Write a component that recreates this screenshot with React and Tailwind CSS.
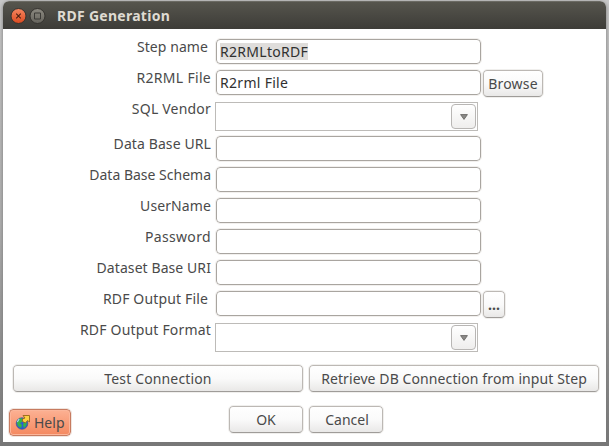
import React from "react";

const rows = [
  { label: "Step name", value: "R2RMLtoRDF", selected: true, tail: "pr-[3px]", track: "tracking-[0.08px]" },
  { label: "R2RML File", value: "R2rml File", button: "Browse", track: "tracking-[0.3px]" },
  { label: "SQL Vendor", combo: true, track: "tracking-[0.2px]" },
  { label: "Data Base URL", track: "tracking-[0.1px]" },
  { label: "Data Base Schema", track: "" },
  { label: "UserName", track: "tracking-[0.1px]" },
  { label: "Password", track: "tracking-[0.35px]" },
  { label: "Dataset Base URI", track: "tracking-[0.08px]" },
  { label: "RDF Output File", button: "...", tail: "pr-[3px]", track: "tracking-[0.15px]" },
  { label: "RDF Output Format", combo: true, track: "tracking-[0.18px]" },
];

function Button({ className = "", children }) {
  return (
    <button
      className={`flex h-[27px] shrink-0 items-center justify-center whitespace-nowrap rounded-[4px] border border-[#bcb8b4] border-b-[#9f9c99] bg-linear-to-b from-white via-[#fafafa] to-[#e9e8e7] outline outline-[#f0efed] ${className}`}
    >
      {children}
    </button>
  );
}

function Combo() {
  return (
    <div className="mt-[2px] flex h-[29px] w-[263px] justify-end border border-[#bdbbb8] bg-white p-px">
      <div className="flex h-[25px] w-[25px] items-center justify-center rounded-[4px] border border-[#b8b6b4] bg-linear-to-b from-white to-[#efeeed] pt-px">
        <svg width="8" height="6" viewBox="0 0 8 6">
          <path d="M.6.6h6.8L4 5.4z" fill="#8c8a88" stroke="#686664" strokeWidth=".9" />
        </svg>
      </div>
    </div>
  );
}

function Field({ row }) {
  return (
    <div className="mt-px ml-px flex h-[25px] w-[265px] items-center rounded-[4px] border border-[#a9a5a0] bg-white pl-[3px] text-[#303030] outline outline-[#f2f0ee]">
      {row.value && (
        <span className={`h-[17px] leading-[17px] tracking-[0.3px] ${row.selected ? "bg-[#dfdddb]" : ""}`}>{row.value}</span>
      )}
    </div>
  );
}

function HelpIcon() {
  return (
    <svg className="-mt-[2px]" width="16" height="16" viewBox="0 0 16 16">
      <circle cx="7" cy="9.5" r="5.8" fill="#2a5fd0" stroke="#3a4f86" strokeWidth=".6" />
      <path d="M2 7l3-3 3 1-1 3-2 1 2 2-1 3-3-2-1-3zM9 8l3 1-1 3-2 2-1-3z" fill="#35b34a" />
      <path d="M2.3 8l1.8-3" stroke="#a9d4f5" strokeWidth="1.2" />
      <path d="M8 1.5h6.5V8l-2-1.5L10.5 9 7.5 7.5V5l2.5-1z" fill="#fbd143" stroke="#976816" strokeWidth=".9" />
    </svg>
  );
}

export default function App() {
  return (
    <div className="h-[446px] w-[609px] overflow-hidden bg-linear-to-b from-[#c9c9c9] via-[#b0b0b0] to-[#777] pt-px pl-[3px] font-['Noto_Sans','Open_Sans',sans-serif] text-[14px] leading-[18px] text-[#4a4a4a]">
      <div className="flex h-[441px] w-[603px] flex-col overflow-hidden rounded-t-[6px] bg-white shadow-[0_1px_4px_#777]">
        <header className="flex h-7 shrink-0 items-center border-t border-[#6b6a63] bg-linear-to-b from-[#56554d] to-[#3d3c38] pl-[7px] font-bold text-[#dfdbd2]">
          <svg width="37" height="18" viewBox="0 0 37 18">
            <defs>
              <linearGradient id="close" x2="0" y2="1">
                <stop stopColor="#f58660" />
                <stop offset="1" stopColor="#dc4a20" />
              </linearGradient>
              <linearGradient id="max" x2="0" y2="1">
                <stop stopColor="#8c8a81" />
                <stop offset="1" stopColor="#65635c" />
              </linearGradient>
            </defs>
            <circle cx="8.5" cy="9" r="7.5" fill="url(#close)" stroke="#35332f" />
            <path d="M6.2 6.7l4.6 4.6M10.8 6.7l-4.6 4.6" stroke="#4c2012" strokeWidth="1.1" />
            <circle cx="27.5" cy="9" r="7.5" fill="url(#max)" stroke="#35332f" />
            <path d="M24.5 6h6v6h-6z" fill="none" stroke="#3b3a36" />
          </svg>
          <span className="ml-[10px] text-[14px] tracking-[0.28px]">RDF Generation</span>
        </header>

        <main className="flex flex-col pt-[9px]">
          {rows.map((row) => (
            <div key={row.label} className={`flex items-start ${row.label === "SQL Vendor" ? "h-[35px]" : "h-[31px]"}`}>
              <div className={`mr-1 w-[208px] text-right whitespace-nowrap ${row.track} ${row.tail || ""}`}>{row.label}</div>
              {row.combo ? <Combo /> : <Field row={row} />}
              {row.button && (
                <Button className={`mt-px ml-[2px] ${row.button === "Browse" ? "w-[60px] tracking-[0.2px]" : "w-[22px] font-bold"}`}>
                  {row.button}
                </Button>
              )}
            </div>
          ))}
        </main>

        <div className="mt-[13px] flex gap-[6px] pl-[10px]">
          <Button className="w-[290px] tracking-[0.15px]">Test Connection</Button>
          <Button className="w-[290px] tracking-[0.1px]">Retrieve DB Connection from input Step</Button>
        </div>

        <footer className="mt-[14px] flex items-start pl-[6px]">
          <button className="mt-[3px] flex h-[27px] w-[62px] items-center gap-[3px] rounded-[4px] border border-[#c77b60] bg-linear-to-b from-[#fcb193] to-[#f4885f] pl-[5px] shadow-[inset_0_0_0_1px_#fbb69b] outline outline-[#f0e5df]">
            <HelpIcon />
            <span>Help</span>
          </button>
          <Button className="ml-[158px] w-[74px]">OK</Button>
          <Button className="ml-[6px] w-[74px]">
            <span className="ml-[2px]">Cancel</span>
          </Button>
        </footer>
      </div>
    </div>
  );
}
